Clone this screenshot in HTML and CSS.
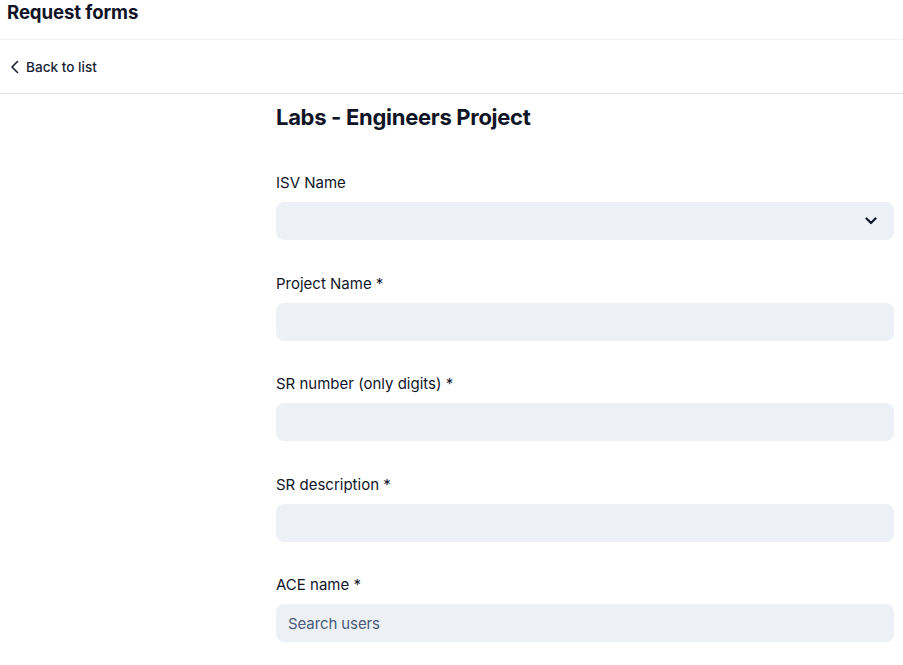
FILE: index.html
```html
<!DOCTYPE html>
<html>
<head>
<meta charset="utf-8">
<link rel="stylesheet" href="styles.css">
</head>
<body>
<header class="topbar"><h1 class="app-title">Request forms</h1></header>
<nav class="backbar">
  <a class="back-link" href="#">
    <svg class="back-icon" width="10" height="14" viewBox="0 0 10 14"><path d="M7.5 1.5 L2 7 L7.5 12.5" fill="none" stroke="#1a1f36" stroke-width="1.6" stroke-linecap="round" stroke-linejoin="round"/></svg>
    <span>Back to list</span>
  </a>
</nav>
<main class="content">
  <form class="form">
    <h2 class="form-title">Labs - Engineers Project</h2>
    <div class="field">
      <label class="label">ISV Name</label>
      <div class="input select">
        <svg class="chevron" width="12" height="8" viewBox="0 0 12 8"><path d="M1.5 1.5 L6 6 L10.5 1.5" fill="none" stroke="#111827" stroke-width="2.2" stroke-linecap="round" stroke-linejoin="round"/></svg>
      </div>
    </div>
    <div class="field">
      <label class="label">Project Name *</label>
      <div class="input"></div>
    </div>
    <div class="field">
      <label class="label">SR number (only digits) *</label>
      <div class="input"></div>
    </div>
    <div class="field">
      <label class="label">SR description *</label>
      <div class="input"></div>
    </div>
    <div class="field">
      <label class="label">ACE name *</label>
      <div class="input"><span class="placeholder">Search users</span></div>
    </div>
  </form>
</main>
</body>
</html>
```
FILE: styles.css
```css
* { box-sizing: border-box; }
html, body { margin: 0; padding: 0; background: #ffffff; }
body {
  font-family: Inter, "Noto Sans", "Liberation Sans", sans-serif;
  color: #0f1629;
  overflow: hidden;
  height: 665px;
}
.topbar {
  height: 40px;
  border-bottom: 1px solid #f0f1f3;
  padding: 0 7px;
}
.app-title {
  margin: 0;
  font-size: 18.6px;
  font-weight: 700;
  line-height: 24px;
  letter-spacing: -0.1px;
  color: #101426;
}
.backbar {
  height: 54px;
  border-bottom: 1px solid #dfe2e7;
  display: flex;
  align-items: center;
  padding: 0 10px 0 10px;
}
.back-link {
  display: flex;
  align-items: center;
  gap: 6px;
  text-decoration: none;
  color: #1a1f36;
  font-size: 13.6px;
  font-weight: 500;
  margin-top: 0;
}
.content {
  display: flex;
  padding-left: 276px;
  padding-right: 9px;
}
.form { flex: 1; }
.form-title {
  margin: 9px 0 0 0;
  font-size: 22px;
  line-height: 28px;
  font-weight: 700;
  letter-spacing: -0.3px;
  color: #0f1426;
}
.field { margin-top: 42px; display: flex; flex-direction: column; }
.field + .field { margin-top: 33.5px; }
.label {
  font-size: 15px;
  line-height: 20px;
  color: #111629;
  margin-bottom: 9px;
}
.input {
  height: 38px;
  border-radius: 8px;
  background: #edf1f5;
  display: flex;
  align-items: center;
  padding: 0 12px;
}
.select { justify-content: flex-end; padding-right: 17px; }
.chevron { display: block; }
.placeholder { font-size: 15px; color: #4b5a78; letter-spacing: -0.1px; }
```
